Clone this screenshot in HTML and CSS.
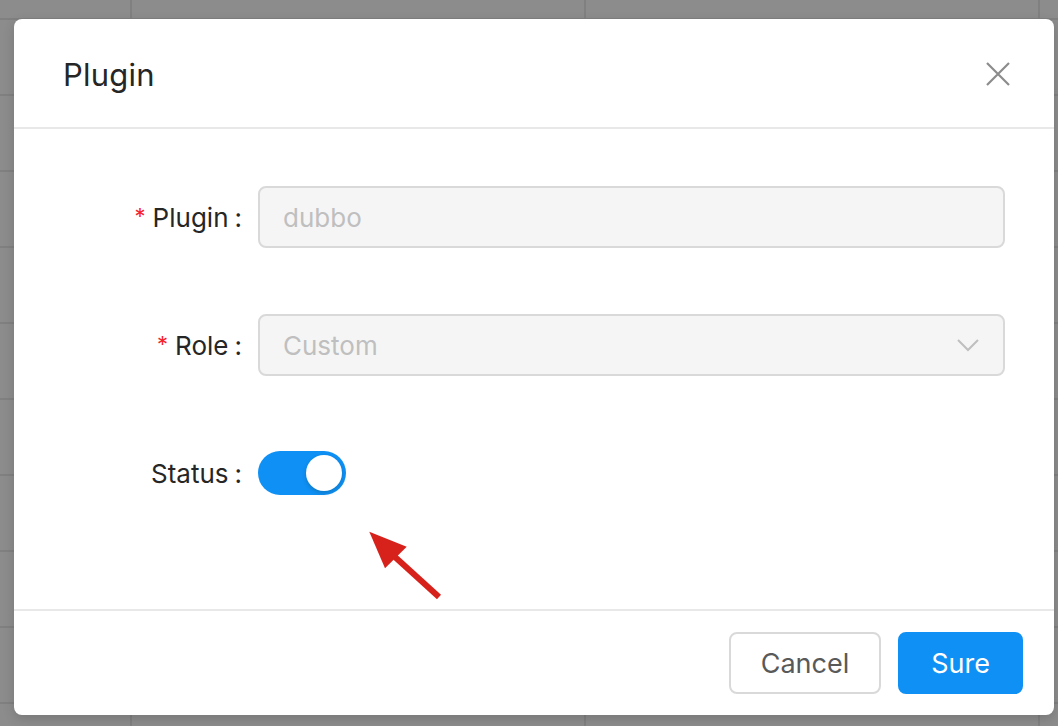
FILE: index.html
```html
<!DOCTYPE html>
<html lang="en">
<head>
<meta charset="utf-8">
<title>Plugin</title>
<link rel="stylesheet" href="styles.css">
</head>
<body>
<div class="mask">
  <div class="modal">
    <div class="modal-header">
      <div class="modal-title">Plugin</div>
      <button class="close" aria-label="Close">
        <svg width="24" height="24" viewBox="0 0 24 24"><path d="M1 1 L23 23 M23 1 L1 23" stroke="#8c8c8c" stroke-width="2.2" fill="none"/></svg>
      </button>
    </div>
    <div class="modal-body">
      <div class="form-row">
        <label class="form-label"><span class="req">*</span>Plugin<span class="colon">:</span></label>
        <div class="field"><div class="input disabled">dubbo</div></div>
      </div>
      <div class="form-row">
        <label class="form-label"><span class="req">*</span>Role<span class="colon">:</span></label>
        <div class="field">
          <div class="input disabled select">
            <span>Custom</span>
            <svg class="chevron" width="22" height="14" viewBox="0 0 22 14"><path d="M1 2 L11 12 L21 2" stroke="#bfbfbf" stroke-width="2" fill="none"/></svg>
          </div>
        </div>
      </div>
      <div class="form-row">
        <label class="form-label">Status<span class="colon">:</span></label>
        <div class="field"><div class="switch"><div class="knob"></div></div></div>
      </div>
    </div>
    <div class="modal-footer">
      <button class="btn">Cancel</button>
      <button class="btn primary">Sure</button>
    </div>
  </div>
</div>
<svg class="annotation" width="80" height="80" viewBox="0 0 80 80">
  <line x1="30" y1="29" x2="74" y2="69" stroke="#d7221c" stroke-width="6"/>
  <polygon points="4.3,3.7 20,40.3 41.7,18.7" fill="#d7221c"/>
</svg>
</body>
</html>
```
FILE: styles.css
```css
* { box-sizing: border-box; }
html, body { margin: 0; padding: 0; }
body {
  width: 1058px;
  height: 726px;
  overflow: hidden;
  font-family: Inter, "Liberation Sans", Arial, sans-serif;
  background-color: #8c8c8c;
  background-image:
    linear-gradient(to bottom, #808080 2px, transparent 2px),
    linear-gradient(to right, #808080 2px, transparent 2px);
  background-size: 100% 76px, 454px 100%;
  background-position: 0 18px, 130px 0;
}
.mask {
  padding: 19px 4px 11px 14px;
}
.modal {
  width: 1040px;
  height: 696px;
  background: #fff;
  border-radius: 8px;
  display: flex;
  flex-direction: column;
  box-shadow: 0 4px 12px rgba(0,0,0,0.15);
}
.modal-header {
  height: 110px;
  flex: none;
  display: flex;
  align-items: center;
  justify-content: space-between;
  padding: 2px 44px 0 49px;
  border-bottom: 2px solid #e8e8e8;
}
.modal-title {
  font-size: 31px;
  color: #262626;
  font-weight: 400;
  letter-spacing: 0.2px;
}
.close {
  border: 0;
  background: none;
  padding: 0;
  width: 24px;
  height: 24px;
  display: flex;
}
.modal-body {
  flex: 1;
  padding-top: 57px;
  display: flex;
  flex-direction: column;
  gap: 66px;
}
.form-row {
  display: grid;
  grid-template-columns: 244px 747px;
  height: 62px;
  align-items: center;
}
.form-label {
  text-align: right;
  padding-right: 16px;
  font-size: 26px;
  color: #262626;
  white-space: nowrap;
}
.req {
  color: #f5222d;
  font-size: 22px;
  margin-right: 7px;
  position: relative;
  top: -3px;
}
.colon {
  margin-left: 6px;
}
.input {
  height: 62px;
  border: 2px solid #d9d9d9;
  border-radius: 8px;
  padding: 0 23px;
  display: flex;
  align-items: center;
  font-size: 26px;
}
.input.disabled {
  background: #f5f5f5;
  color: #bfbfbf;
}
.select {
  justify-content: space-between;
}
.chevron { margin-right: 1px; }
.switch {
  width: 88px;
  height: 44px;
  border-radius: 22px;
  background: #0f90f5;
  padding: 4px;
  display: flex;
  justify-content: flex-end;
}
.knob {
  width: 36px;
  height: 36px;
  border-radius: 50%;
  background: #fff;
  box-shadow: 0 2px 4px rgba(0,35,11,0.2);
}
.modal-footer {
  height: 106px;
  flex: none;
  border-top: 2px solid #e8e8e8;
  display: flex;
  align-items: center;
  justify-content: flex-end;
  gap: 17px;
  padding-right: 31px;
}
.btn {
  height: 62px;
  border: 2px solid #d9d9d9;
  border-radius: 8px;
  background: #fff;
  color: #595959;
  font-family: inherit;
  font-size: 27px;
  padding: 0 30px;
}
.btn.primary {
  background: #0f90f5;
  border-color: #0f90f5;
  color: #fff;
  padding: 0 31px;
}
.annotation {
  position: absolute;
  left: 365px;
  top: 528px;
}
```
